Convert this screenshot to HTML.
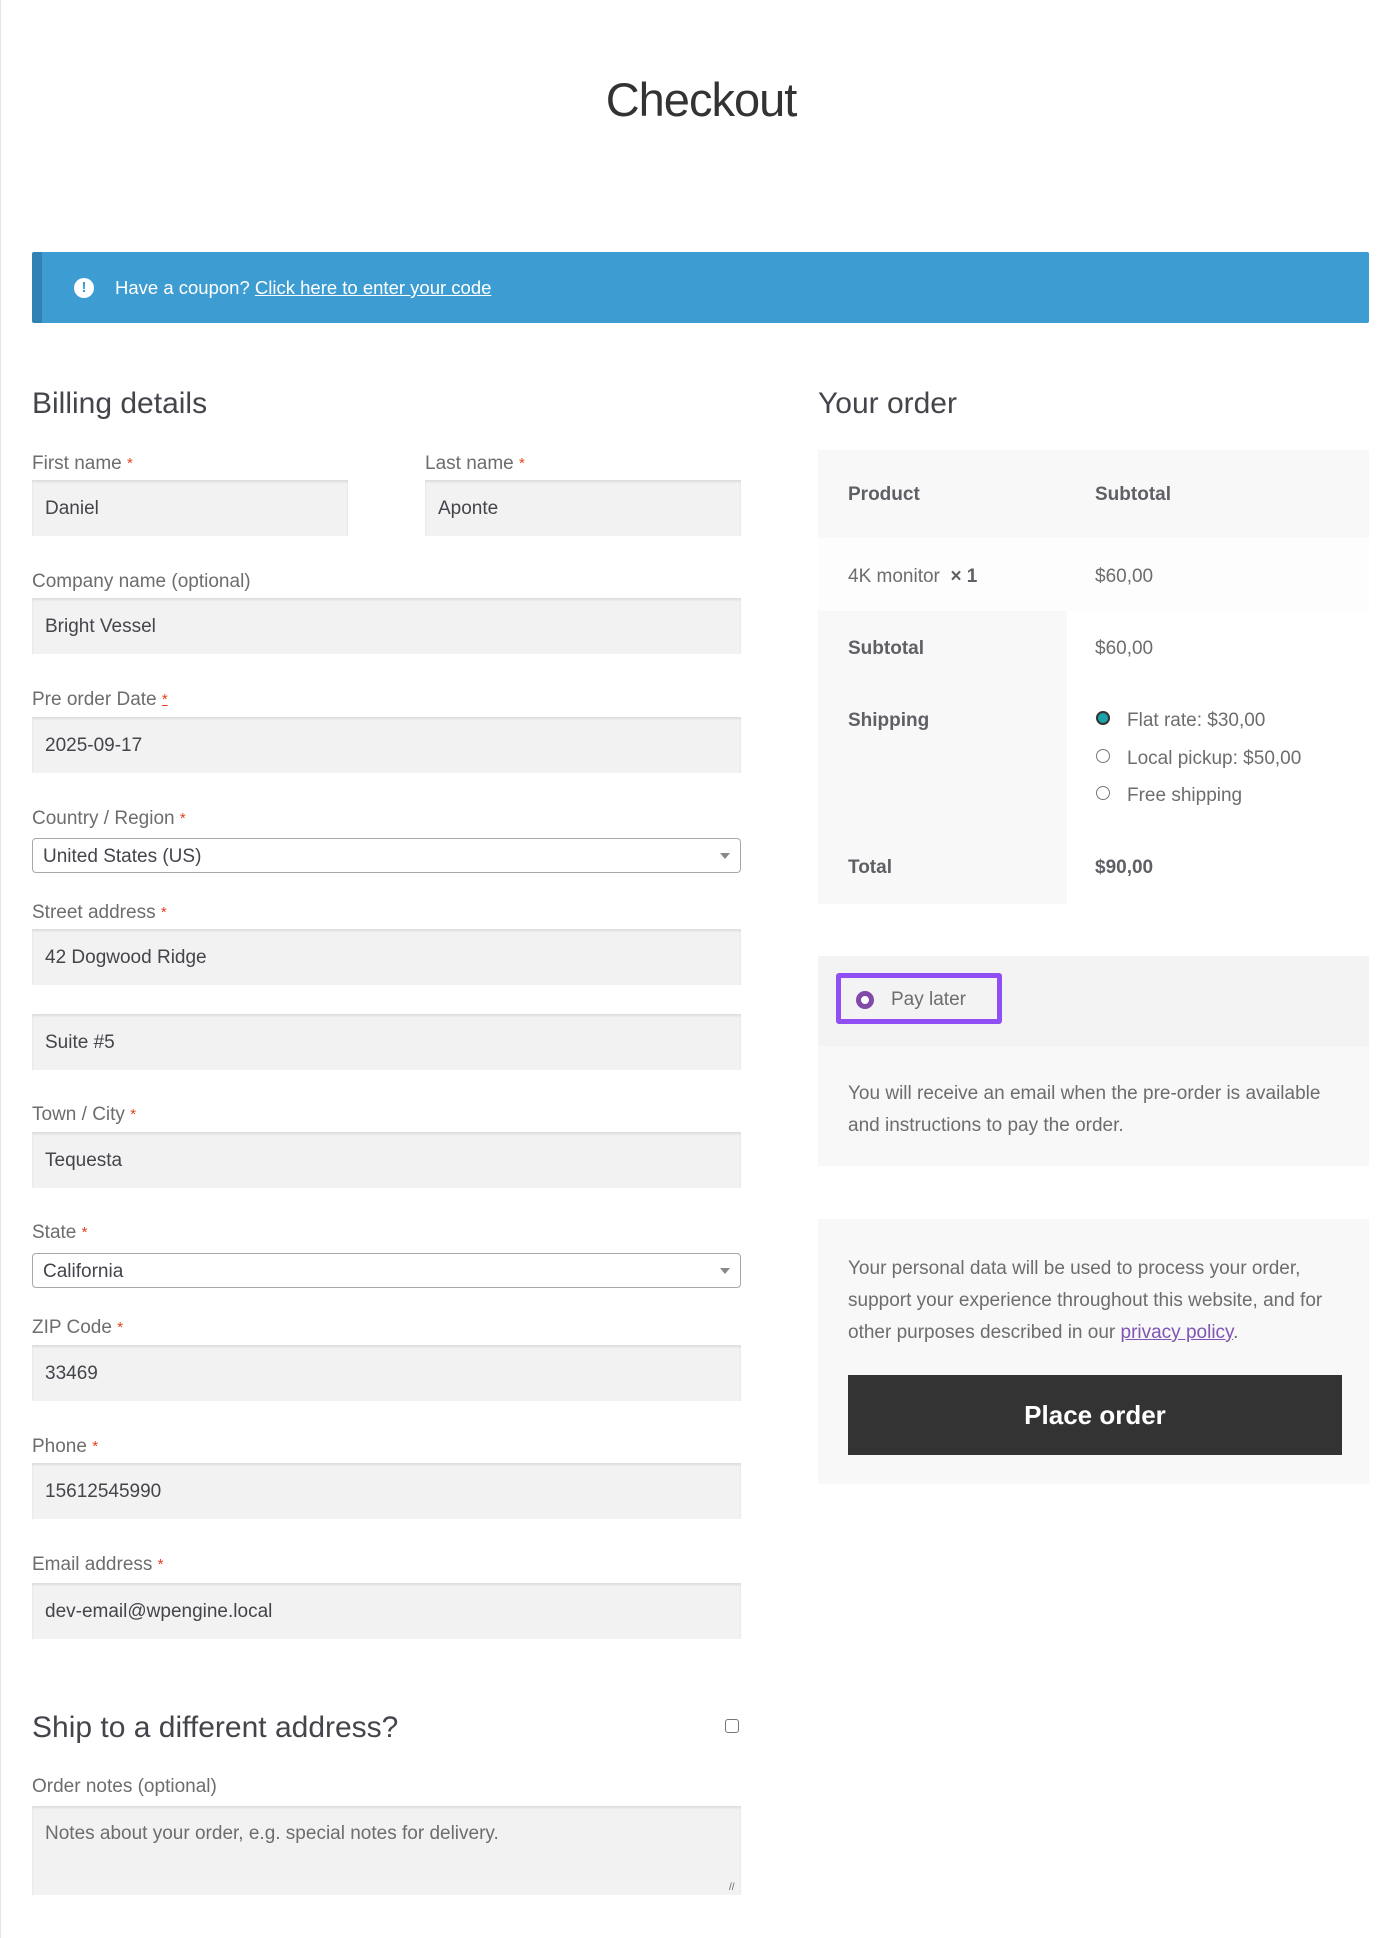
<!DOCTYPE html>
<html><head><meta charset="utf-8">
<style>
*{box-sizing:border-box;margin:0;padding:0}
html,body{width:1400px;height:1938px;background:#fff;overflow:hidden}
body{position:relative;font-family:"Liberation Sans",sans-serif;color:#6d6d6d;font-size:19px;border-left:1px solid #e6e6e6}
.a{position:absolute;white-space:nowrap}
.lbl{position:absolute;font-size:19px;color:#6d6d6d;line-height:22px}
.lbl b{color:#e2401c;font-weight:normal;font-size:15px;vertical-align:top}
.in{position:absolute;background:#f2f2f2;box-shadow:inset 0 2px 2px rgba(0,0,0,.09);color:#43454b;font-size:19px;padding-left:13px;display:flex;align-items:center;padding-top:2px}
.sel{position:absolute;background:#fff;border:1px solid #a8a8a8;border-radius:4px;color:#43454b;font-size:19px;padding-left:10px;display:flex;align-items:center;padding-top:2px}
.sel:after{content:"";position:absolute;right:10px;top:14px;border:5px solid transparent;border-top:6px solid #888}
h2{position:absolute;font-weight:300;font-size:30px;color:#43454b;white-space:nowrap}
.rad{position:absolute;width:14px;height:14px;border-radius:50%;border:1px solid #777;background:#fff}
</style></head><body>
<div class="a" style="left:0;width:1400px;top:72px;text-align:center;font-size:47px;font-weight:300;color:#333;letter-spacing:-1px">Checkout</div>

<div class="a" style="left:31px;top:252px;width:1337px;height:71px;background:#3d9cd2;border-left:10px solid #3182b4;border-radius:2px"></div>
<div class="a" style="left:73px;top:278px;width:20px;height:20px;border-radius:50%;background:#fff;color:#3d9cd2;font-weight:bold;font-size:15px;text-align:center;line-height:20px">!</div>
<div class="a" style="left:114px;top:277px;color:#fff;font-size:18.5px">Have a coupon? <span style="text-decoration:underline">Click here to enter your code</span></div>

<h2 style="left:31px;top:387px">Billing details</h2>
<h2 style="left:817px;top:387px">Your order</h2>

<div class="lbl" style="left:31px;top:453px">First name <b>*</b></div>
<div class="in" style="left:31px;top:480px;width:316px;height:56px">Daniel</div>
<div class="lbl" style="left:424px;top:453px">Last name <b>*</b></div>
<div class="in" style="left:424px;top:480px;width:316px;height:56px">Aponte</div>

<div class="lbl" style="left:31px;top:571px">Company name (optional)</div>
<div class="in" style="left:31px;top:598px;width:709px;height:56px">Bright Vessel</div>

<div class="lbl" style="left:31px;top:689px">Pre order Date <b style="text-decoration:underline">*</b></div>
<div class="in" style="left:31px;top:717px;width:709px;height:56px">2025-09-17</div>

<div class="lbl" style="left:31px;top:808px">Country / Region <b>*</b></div>
<div class="sel" style="left:31px;top:838px;width:709px;height:35px">United States (US)</div>

<div class="lbl" style="left:31px;top:902px">Street address <b>*</b></div>
<div class="in" style="left:31px;top:929px;width:709px;height:56px">42 Dogwood Ridge</div>
<div class="in" style="left:31px;top:1014px;width:709px;height:56px">Suite #5</div>

<div class="lbl" style="left:31px;top:1104px">Town / City <b>*</b></div>
<div class="in" style="left:31px;top:1132px;width:709px;height:56px">Tequesta</div>

<div class="lbl" style="left:31px;top:1222px">State <b>*</b></div>
<div class="sel" style="left:31px;top:1253px;width:709px;height:35px">California</div>

<div class="lbl" style="left:31px;top:1317px">ZIP Code <b>*</b></div>
<div class="in" style="left:31px;top:1345px;width:709px;height:56px">33469</div>

<div class="lbl" style="left:31px;top:1436px">Phone <b>*</b></div>
<div class="in" style="left:31px;top:1463px;width:709px;height:56px">15612545990</div>

<div class="lbl" style="left:31px;top:1554px">Email address <b>*</b></div>
<div class="in" style="left:31px;top:1583px;width:709px;height:56px">dev-email@wpengine.local</div>

<h2 style="left:31px;top:1711px">Ship to a different address?</h2>
<div class="a" style="left:724px;top:1719px;width:14px;height:14px;border:1px solid #777;border-radius:3px"></div>

<div class="lbl" style="left:31px;top:1776px">Order notes (optional)</div>
<div class="in" style="left:31px;top:1806px;width:709px;height:89px;align-items:flex-start;padding-top:17px;color:#6d6d6d">Notes about your order, e.g. special notes for delivery.</div>
<div class="a" style="left:728px;top:1882px;font-size:10px;color:#666">//</div>

<div class="a" style="left:817px;top:450px;width:551px;height:88px;background:#f8f8f8"></div>
<div class="a" style="left:817px;top:538px;width:551px;height:73px;background:#fdfdfd"></div>
<div class="a" style="left:817px;top:611px;width:249px;height:293px;background:#f8f8f8"></div>
<div class="a" style="left:847px;top:484px;font-weight:bold;color:#5f6065">Product</div>
<div class="a" style="left:1094px;top:484px;font-weight:bold;color:#5f6065">Subtotal</div>
<div class="a" style="left:847px;top:566px">4K monitor &nbsp;<b style="color:#5f6065">× 1</b></div>
<div class="a" style="left:1094px;top:566px">$60,00</div>
<div class="a" style="left:847px;top:638px;font-weight:bold;color:#5f6065">Subtotal</div>
<div class="a" style="left:1094px;top:638px">$60,00</div>
<div class="a" style="left:847px;top:710px;font-weight:bold;color:#5f6065">Shipping</div>
<div class="rad" style="left:1095px;top:711px;background:#1aa3a8;border:2px solid #333"></div>
<div class="a" style="left:1126px;top:710px">Flat rate: $30,00</div>
<div class="rad" style="left:1095px;top:749px"></div>
<div class="a" style="left:1126px;top:748px">Local pickup: $50,00</div>
<div class="rad" style="left:1095px;top:786px"></div>
<div class="a" style="left:1126px;top:785px">Free shipping</div>
<div class="a" style="left:847px;top:857px;font-weight:bold;color:#5f6065">Total</div>
<div class="a" style="left:1094px;top:857px;font-weight:bold;color:#5f6065">$90,00</div>

<div class="a" style="left:817px;top:956px;width:551px;height:90px;background:#f3f3f3"></div>
<div class="a" style="left:817px;top:1046px;width:551px;height:120px;background:#f8f8f8"></div>
<div class="a" style="left:835px;top:973px;width:166px;height:51px;border:5px solid #8f4ff5;border-radius:3px"></div>
<div class="a" style="left:855px;top:991px;width:18px;height:18px;border-radius:50%;border:5px solid #7f4ba8;background:#fff"></div>
<div class="a" style="left:890px;top:989px">Pay later</div>
<div class="a" style="left:847px;top:1078px;line-height:32px">You will receive an email when the pre-order is available<br>and instructions to pay the order.</div>

<div class="a" style="left:817px;top:1219px;width:551px;height:265px;background:#f8f8f8"></div>
<div class="a" style="left:847px;top:1253px;line-height:32px">Your personal data will be used to process your order,<br>support your experience throughout this website, and for<br>other purposes described in our <span style="color:#7f54b3;text-decoration:underline">privacy policy</span>.</div>
<div class="a" style="left:847px;top:1375px;width:494px;height:80px;background:#333;color:#fff;font-weight:bold;font-size:26px;text-align:center;line-height:80px">Place order</div>
</body></html>
